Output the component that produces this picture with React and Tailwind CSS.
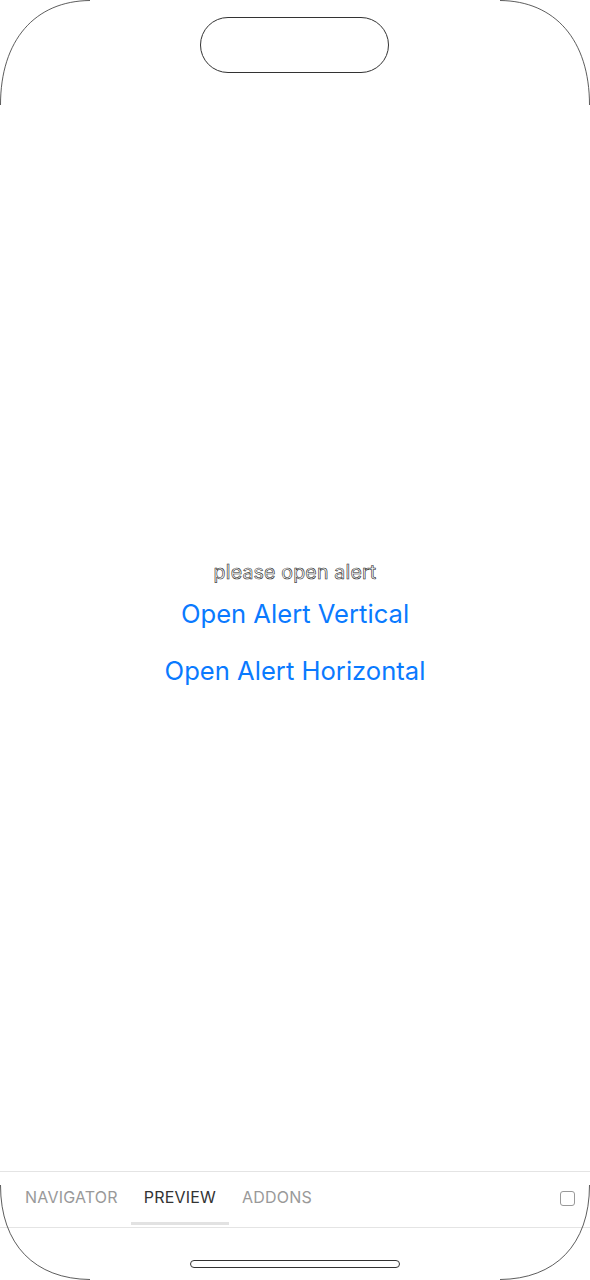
export default function App() {
  return (
    <div className="relative flex h-[1280px] w-[590px] flex-col overflow-hidden bg-white font-['Inter',_'Liberation_Sans',_sans-serif]">
      <DeviceFrame />

      <main className="flex flex-1 flex-col items-center pt-[558px]">
        <p className="text-[19.5px] leading-[28px] tracking-[0.2px] text-white [-webkit-text-stroke:0.6px_#222]">
          please open alert
        </p>
        <button className="mt-[13px] text-[25.6px] leading-[30px] text-[#0a7aff]">
          Open Alert Vertical
        </button>
        <button className="mt-[27px] text-[25.6px] leading-[30px] text-[#0a7aff]">
          Open Alert Horizontal
        </button>
      </main>

      <nav className="mb-[52px] flex h-[57px] items-stretch border-y border-[#e4e4e4]">
        <div className="flex flex-1 items-stretch pl-[12px]">
          <Tab label="NAVIGATOR" />
          <Tab label="PREVIEW" active />
          <Tab label="ADDONS" />
        </div>
        <div className="flex items-center pb-[3px] pr-[15px]">
          <span className="h-[15px] w-[15px] rounded-[3px] border-[1.5px] border-[#999]" />
        </div>
      </nav>
    </div>
  );
}

function Tab({ label, active }) {
  return (
    <div className="relative flex items-center px-[13px] pb-[5px]">
      <span
        className={`text-[16px] tracking-[0.2px] ${
          active ? "text-[#333]" : "text-[#999]"
        }`}
      >
        {label}
      </span>
      {active && (
        <span className="absolute bottom-[2px] left-0 right-0 h-[3px] bg-[#e2e2e2]" />
      )}
    </div>
  );
}

// Thin phone outline: rounded corners, island and home bar drawn over the page.
function DeviceFrame() {
  return (
    <>
      <svg
        className="pointer-events-none absolute inset-0"
        width="590"
        height="1280"
        viewBox="0 0 590 1280"
        fill="none"
        stroke="#333"
        strokeWidth="0.8"
      >
        <path d="M0.5 105 C0.5 40 35 1 90 0.5" />
        <path d="M589.5 105 C589.5 40 555 1 500 0.5" />
        <path d="M0.5 1185 C0.5 1245 35 1279 90 1279.5" />
        <path d="M589.5 1185 C589.5 1245 555 1279 500 1279.5" />
      </svg>
      <div className="pointer-events-none absolute left-[200px] top-[17px] h-[56px] w-[189px] rounded-full border border-[#333]" />
      <div className="pointer-events-none absolute left-[190px] top-[1260px] h-[8px] w-[210px] rounded-full border border-[#333]" />
    </>
  );
}
